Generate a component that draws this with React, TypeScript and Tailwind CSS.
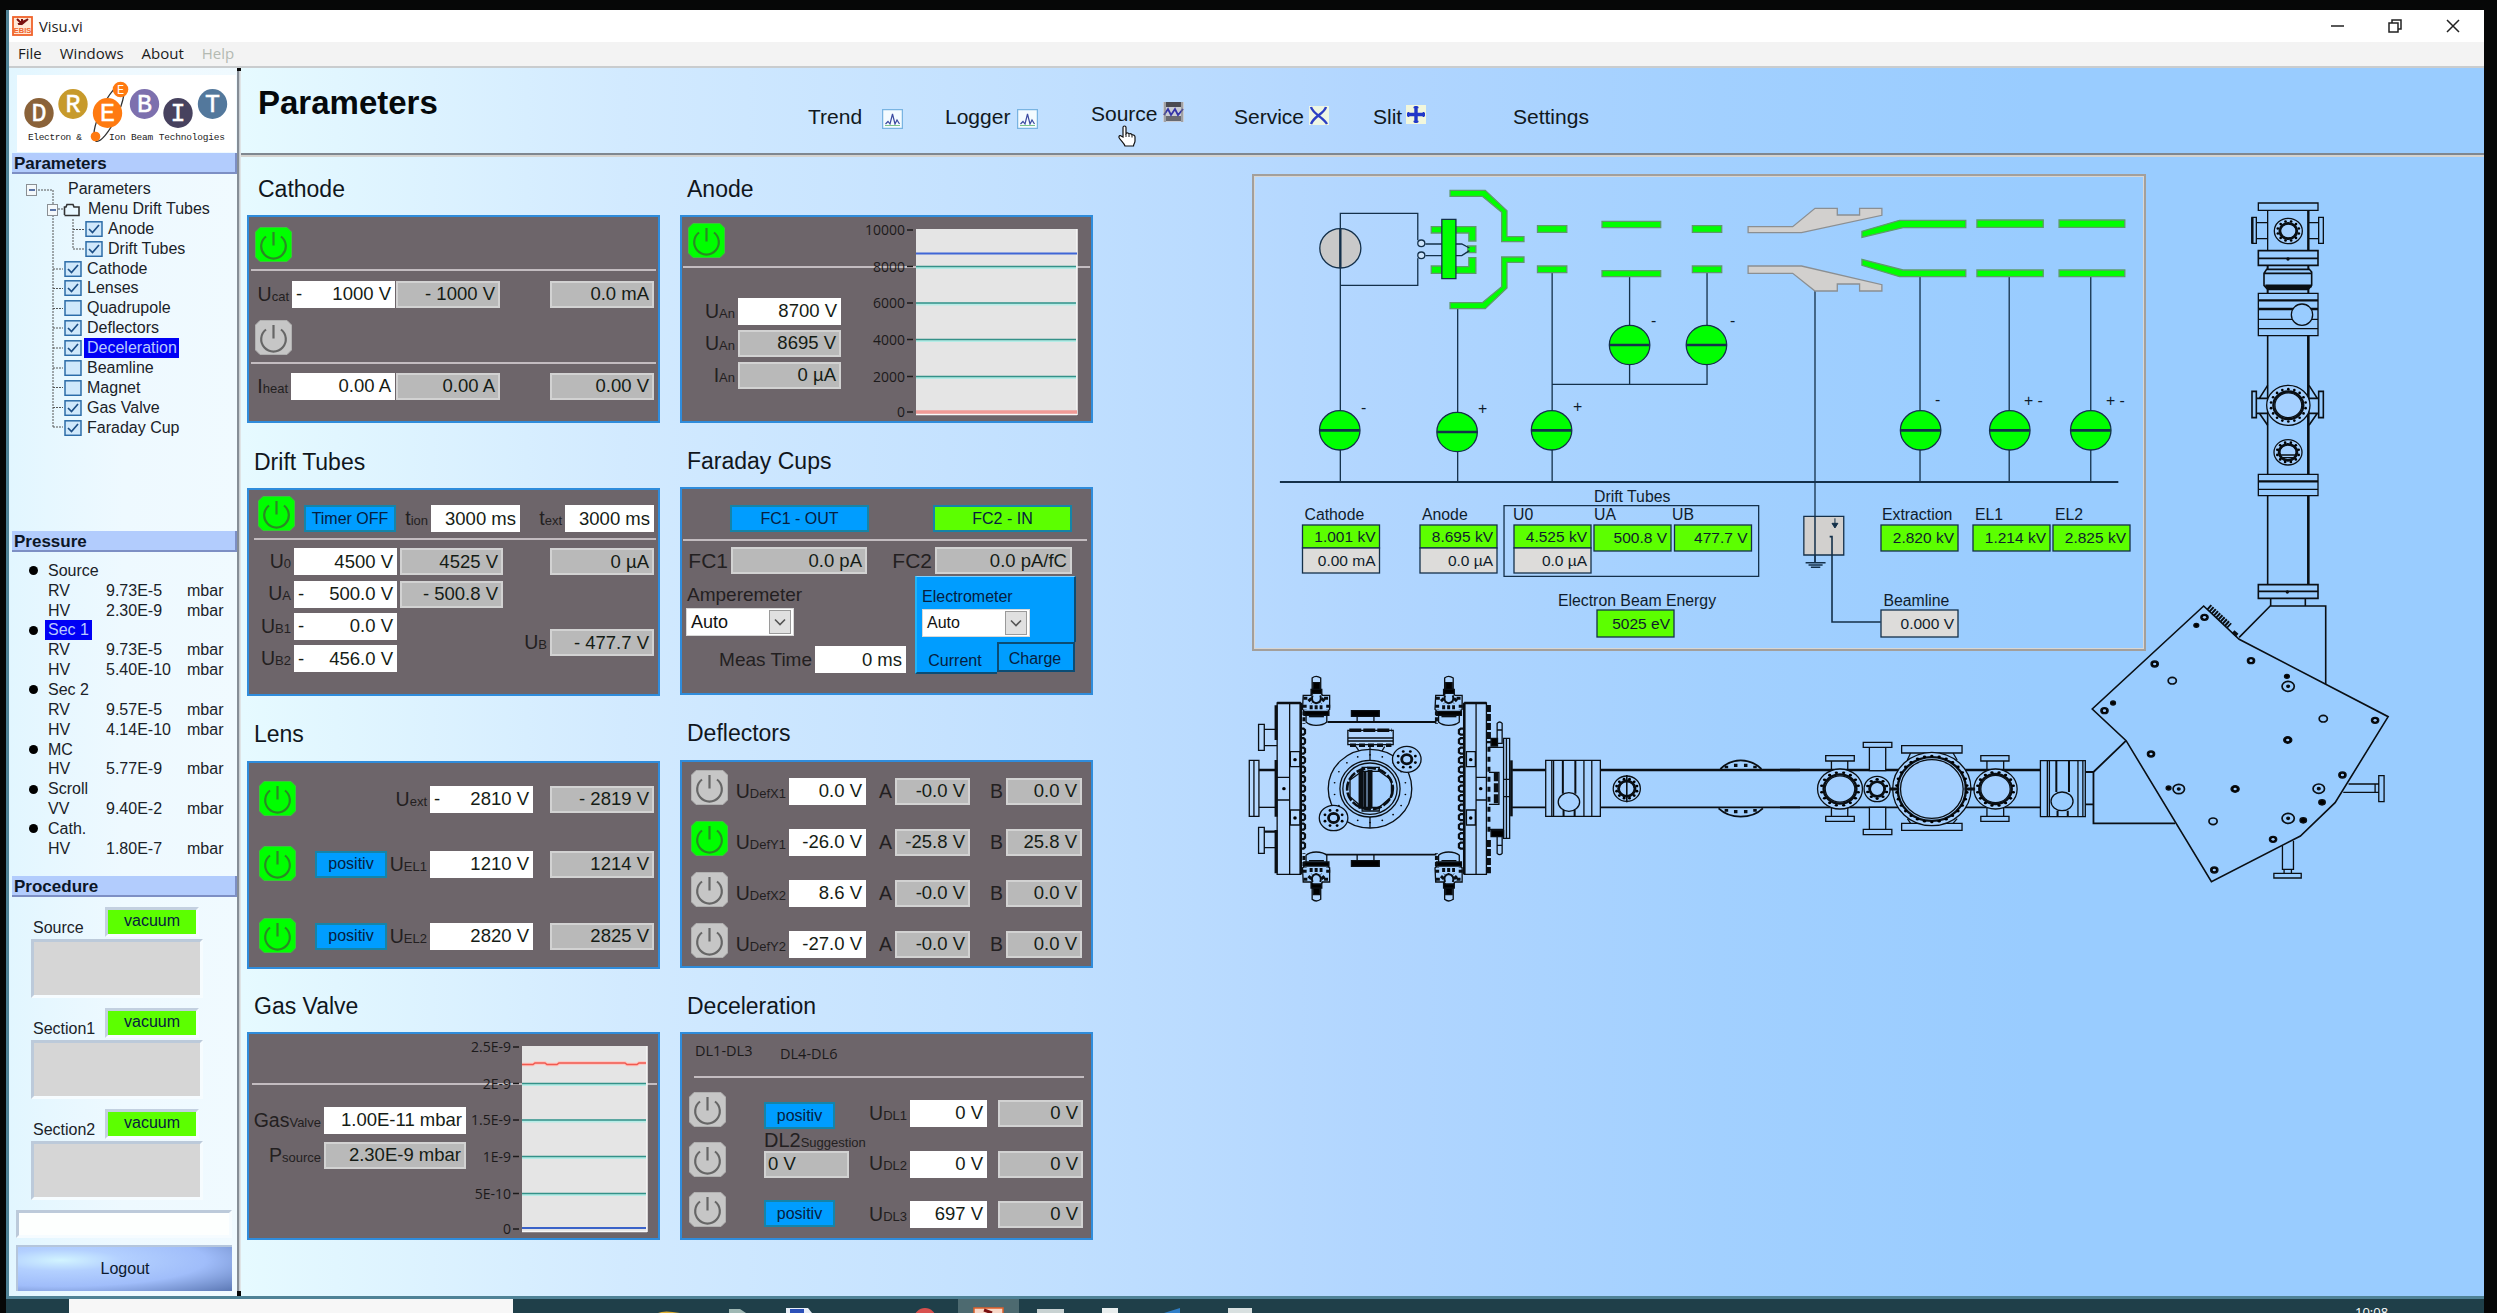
import React from "react";

const cx = (...c: (string | false | undefined)[]) => c.filter(Boolean).join(" ");

/* ---------- small building blocks ---------- */

function Power({ on, className }: { on?: boolean; className?: string }) {
  return (
    <svg viewBox="0 0 37 35" className={cx("h-[35px] w-[37px] shrink-0", className)}>
      <path
        d="M5 0.5H32L36.5 5V30L32 34.5H5L0.5 30V5Z"
        fill={on ? "#00ff00" : "#c6c6c6"}
        stroke={on ? "#38c838" : "#b0b0b0"}
      />
      <path d="M11 9.5A12.3 12.3 0 1 0 26 9.5" fill="none" stroke={on ? "#2a8a24" : "#666"} strokeWidth="2.2" />
      <path d="M18.5 5V18.5" stroke={on ? "#2a8a24" : "#666"} strokeWidth="2.2" />
    </svg>
  );
}

function Field({ v, minus, gray, left, className }: { v: string; minus?: boolean; gray?: boolean; left?: boolean; className?: string }) {
  return (
    <div
      className={cx(
        "flex h-[27px] shrink-0 items-center whitespace-pre px-1 text-[18.5px] leading-none text-[#151c15]",
        gray ? "border-2 border-[#d2d2d2] bg-[#b9b9b9] pr-[3px] pl-0.5" : "bg-white",
        left ? "justify-start" : minus ? "justify-between" : "justify-end",
        className,
      )}
    >
      {minus && <span>-</span>}
      <span>{v}</span>
    </div>
  );
}

function Label({ t, s, className }: { t: string; s?: string; className?: string }) {
  return (
    <div className={cx("flex shrink-0 items-baseline justify-end whitespace-pre pr-[3px] text-[19.5px] leading-none text-[#231f21]", className)}>
      {t}
      {s && <span className="text-[13px]">{s}</span>}
    </div>
  );
}

function Btn({ t, green, className }: { t: string; green?: boolean; className?: string }) {
  return (
    <div
      className={cx(
        "flex h-[27px] shrink-0 items-center justify-center border-2 border-[#1584a8] text-base leading-none text-[#06203f]",
        green ? "bg-[#5cff00]" : "bg-[#009dff]",
        className,
      )}
    >
      {t}
    </div>
  );
}

function Rule({ className }: { className?: string }) {
  return <div className={cx("h-0.5 shrink-0 bg-[#c3bcc0]", className)} />;
}

function Panel({ title, shift, headClass, children }: { title: string; shift?: string; headClass?: string; children: React.ReactNode }) {
  return (
    <section className={cx("flex h-[272.4px] w-[413px] flex-col", shift)}>
      <h2 className={cx("flex h-[63px] items-center pt-[11px] pl-[7px] text-[23px] leading-none text-[#10161c]", headClass)}>{title}</h2>
      <div className="relative flex h-[208px] w-[413px] shrink-0 border-2 border-[#2f8cdb] bg-[#6d656a]">{children}</div>
    </section>
  );
}

function Select({ className, textClass }: { className?: string; textClass?: string }) {
  return (
    <div className={cx("flex h-7 w-[108px] shrink-0 items-center border border-[#d8d8d8] bg-white leading-none text-[#111]", className)}>
      <span className={cx("flex-1 pl-1", textClass)}>Auto</span>
      <span className="mr-0.5 flex h-6 w-[22px] items-center justify-center border border-[#9a9a9a] bg-[#e0e0e0]">
        <svg viewBox="0 0 12 8" className="h-2 w-3">
          <path d="M1 1.5L6 6.5L11 1.5" fill="none" stroke="#555" strokeWidth="1.6" />
        </svg>
      </span>
    </div>
  );
}

/* Strip chart with six labelled ticks; plot height is shared by both charts. */
function Chart({ labels, x0, x1, w, children, className }: { labels: string[]; x0: number; x1: number; w: number; children: React.ReactNode; className?: string }) {
  const ys = [13, 49.5, 86, 122.5, 159.5, 195];
  return (
    <svg width={w} height="204" viewBox={`0 0 ${w} 204`} className={cx("shrink-0", className)}>
      <rect x={x0} y="12" width={x1 - x0} height="186" fill="#e5e5e5" />
      <path d={`M${x1} 12V198M${x0} 197.5H${x1}`} stroke="#f8f8f8" strokeWidth="1.5" />
      {labels.map((l, i) => (
        <g key={l}>
          <text x={x0 - 11} y={ys[i] + 5} textAnchor="end" fontSize="14" fontFamily="'Open Sans', sans-serif" fill="#1c1a1b">
            {l}
          </text>
          <path d={`M${x0 - 9} ${ys[i]}H${x0 - 3}`} stroke="#1c1a1b" strokeWidth="1.5" />
          {i > 0 && i < 5 && (
            <>
              <path d={`M${x0} ${ys[i] + 1}H${x1 - 1}`} stroke="#b5ece6" strokeWidth="3" />
              <path d={`M${x0} ${ys[i]}H${x1 - 1}`} stroke="#359188" strokeWidth="1.6" />
            </>
          )}
        </g>
      ))}
      {children}
    </svg>
  );
}

/* ---------- sidebar ---------- */

function Logo() {
  const balls: [string, number, number, string][] = [
    ["D", 22, 38, "#8a6239"],
    ["R", 56, 29, "#c79a2b"],
    ["E", 90.5, 38, "#ff7a10"],
    ["B", 127.5, 29, "#7d70ae"],
    ["I", 161, 38, "#47425f"],
    ["T", 195.5, 29, "#53789c"],
  ];
  return (
    <svg viewBox="0 0 219 77" className="ml-2 h-[77px] w-[219px] shrink-0 bg-white">
      <ellipse cx="92" cy="38" rx="8.5" ry="31" transform="rotate(25 92 38)" fill="none" stroke="#333" strokeWidth="1.3" />
      {balls.map(([c, x, y, f]) => (
        <g key={c + x}>
          <ellipse cx={x} cy={y} rx="14.7" ry="15" fill={f} />
          <text x={x} y={y + 8} textAnchor="middle" fontFamily="'Liberation Mono', monospace" fontSize="25" fill="#fff" stroke="#fff" strokeWidth="0.5">
            {c}
          </text>
        </g>
      ))}
      <circle cx="103.5" cy="14.5" r="7.8" fill="#ff7a10" />
      <text x="103.5" y="19" textAnchor="middle" fontFamily="'Liberation Mono', monospace" fontSize="12" fill="#fff">
        E
      </text>
      <circle cx="78.5" cy="61.5" r="4.8" fill="#ff7a10" />
      <g fontFamily="'Liberation Mono', monospace" fontSize="9.5" fill="#222">
        <text x="11" y="65" textLength="54">Electron &amp;</text>
        <text x="92" y="65" textLength="116">Ion Beam Technologies</text>
      </g>
    </svg>
  );
}

function SideHeader({ t }: { t: string }) {
  return (
    <div className="ml-[3px] flex h-[21px] shrink-0 items-center border-r-2 border-b-2 border-[#7d8fc4] bg-[#b2ccfd] pt-0.5 pl-0.5 text-[17px] leading-none font-bold text-[#0c1626]">
      {t}
    </div>
  );
}

const tree: { t: string; lvl: number; on?: boolean; sel?: boolean }[] = [
  { t: "Anode", lvl: 2, on: true },
  { t: "Drift Tubes", lvl: 2, on: true },
  { t: "Cathode", lvl: 1, on: true },
  { t: "Lenses", lvl: 1, on: true },
  { t: "Quadrupole", lvl: 1 },
  { t: "Deflectors", lvl: 1, on: true },
  { t: "Deceleration", lvl: 1, on: true, sel: true },
  { t: "Beamline", lvl: 1 },
  { t: "Magnet", lvl: 1 },
  { t: "Gas Valve", lvl: 1, on: true },
  { t: "Faraday Cup", lvl: 1, on: true },
];

function Tree() {
  return (
    <div className="relative mt-[5px] text-base leading-none text-[#1a2228]">
      <svg viewBox="0 0 90 260" className="absolute top-0 left-0 h-[260px] w-[90px]">
        <path
          d="M29 11H44V26M44 36V248M49 30H55M64 40V70M64 50.5H75M64 70H75M44 90H54M44 109.500H54M44 129.500H54M44 149H54M44 169H54M44 189H54M44 208.500H54M44 228.500H54M44 248H54"
          fill="none"
          stroke="#555"
          strokeDasharray="2 1"
        />
        <g fill="#f4f8fa" stroke="#8a8f94">
          <rect x="17.500" y="5.500" width="10" height="11" />
          <rect x="38.500" y="25.500" width="10" height="11" />
        </g>
        <path d="M20 11H26M41 31H47" stroke="#2a4a8a" strokeWidth="1.500" />
        <path d="M55.500 36V28H57L58 25.500H64L65 28H70V36.500H55.500" fill="none" stroke="#333" strokeWidth="1.600" />
      </svg>
      <div className="flex h-[19.9px] items-center pl-[59px]">Parameters</div>
      <div className="flex h-[19.9px] items-center pl-[79px]">Menu Drift Tubes</div>
      {tree.map((r) => (
        <div key={r.t} className={cx("flex h-[19.9px] items-center", r.lvl === 2 ? "pl-[76px]" : "pl-[55px]")}>
          <svg viewBox="0 0 18 16" className="mr-0.5 h-4 w-[18px] shrink-0">
            <rect x="1" y="0.800" width="16" height="14.500" fill="#cfe8fb" stroke="#2c6ca8" strokeWidth="1.500" />
            {r.on && <path d="M4 8L7.500 11.500L14 4" fill="none" stroke="#1d4f86" strokeWidth="1.700" />}
          </svg>
          <span className={cx("flex h-[19.5px] items-center px-[3px]", r.sel && "bg-[#0000f5] pr-0.5 text-[#b9c9ff]")}>{r.t}</span>
        </div>
      ))}
    </div>
  );
}

const pressure: { h?: string; sel?: boolean; k?: string; v?: string }[] = [
  { h: "Source" },
  { k: "RV", v: "9.73E-5" },
  { k: "HV", v: "2.30E-9" },
  { h: "Sec 1", sel: true },
  { k: "RV", v: "9.73E-5" },
  { k: "HV", v: "5.40E-10" },
  { h: "Sec 2" },
  { k: "RV", v: "9.57E-5" },
  { k: "HV", v: "4.14E-10" },
  { h: "MC" },
  { k: "HV", v: "5.77E-9" },
  { h: "Scroll" },
  { k: "VV", v: "9.40E-2" },
  { h: "Cath." },
  { k: "HV", v: "1.80E-7" },
];

function Pressure() {
  return (
    <div className="mt-[9px] text-base leading-none text-[#1a2228]">
      {pressure.map((r, i) => (
        <div key={i} className="flex h-[19.85px] items-center pl-5">
          {r.h ? (
            <>
              <span className="size-[9px] rounded-full bg-black" />
              <span className={cx("ml-[7px] flex h-5 items-center px-[3px]", r.sel && "bg-[#0000f5] text-[#b9c9ff]")}>{r.h}</span>
            </>
          ) : (
            <>
              <span className="ml-[19px] w-[58px]">{r.k}</span>
              <span className="w-[81px]">{r.v}</span>
              <span>mbar</span>
            </>
          )}
        </div>
      ))}
    </div>
  );
}

function Procedure({ t, className }: { t: string; className?: string }) {
  return (
    <div className={cx("flex h-[101px] flex-col pl-[22px]", className)}>
      <div className="flex h-[32px] items-start text-base leading-none text-[#1a2228]">
        <span className="w-[74px] pt-[13px] pl-0.5">{t}</span>
        <span className="flex h-[30px] w-[94px] items-center justify-center border-[3px] border-t-[#c3d0e0] border-r-[#f6fcff] border-b-[#f6fcff] border-l-[#c3d0e0] bg-[#5cff00] pb-0.5 text-[#06203f]">
          vacuum
        </span>
      </div>
      <div className="h-[59px] w-[172px] border-[3px] border-t-[#bccada] border-r-[#f6fcff] border-b-[#f6fcff] border-l-[#bccada] bg-[#d6d6d6]" />
    </div>
  );
}

function Sidebar() {
  return (
    <aside className="flex w-[228px] shrink-0 flex-col bg-linear-to-r from-[#e2f6ff] via-[#eef9ff] to-[#f0faff] pt-[7px]">
      <Logo />
      <div className="mt-px flex h-[378px] shrink-0 flex-col">
        <SideHeader t="Parameters" />
        <Tree />
      </div>
      <div className="flex h-[345px] shrink-0 flex-col">
        <SideHeader t="Pressure" />
        <Pressure />
      </div>
      <SideHeader t="Procedure" />
      <Procedure t="Source" className="mt-2.5" />
      <Procedure t="Section1" />
      <Procedure t="Section2" />
      <div className="mt-0 ml-[7px] h-7 w-[216px] shrink-0 border-[3px] border-t-[#bccada] border-r-[#f6fcff] border-b-[#f6fcff] border-l-[#bccada] bg-[#fdfffe]" />
      <div className="mt-[7px] ml-[7px] flex h-[46px] w-[216px] shrink-0 items-center justify-center border-t-2 border-l-2 border-[#b5c6dc] bg-[radial-gradient(ellipse_at_20%_30%,#d2f4ff_0%,#b3d0ff_25%,#a0bdfa_60%,#5c78b4_100%)] text-base text-[#0c1a30]">
        Logout
      </div>
    </aside>
  );
}

/* ---------- header ---------- */

function TrendIcon() {
  return (
    <svg viewBox="0 0 21 20" className="h-5 w-[21px]">
      <rect x="0.500" y="0.500" width="20" height="19" fill="#f4fbff" stroke="#79b4e2" strokeWidth="1.500" />
      <path d="M3.500 15L6 12.500L8 15L10.500 5L13 15L15 11L17.500 15" fill="none" stroke="#3b4aa0" strokeWidth="1.200" />
      <path d="M3 16.500H18" stroke="#7cc48a" />
    </svg>
  );
}

function TopBar() {
  return (
    <header className="flex h-[87px] shrink-0 border-b-2 border-[#7f8790] text-[21px] leading-none text-[#101820] shadow-[0_2px_0_#d5d3cf]">
      <h1 className="w-[567px] pt-[18px] pl-[17px] text-[33px] leading-none font-bold text-[#05090c]">Parameters</h1>
      <nav className="flex flex-1 items-start pt-[38px]">
        <span className="flex w-[137px] justify-between pr-[42px]">
          Trend <span className="pt-[3px]"><TrendIcon /></span>
        </span>
        <span className="flex w-[146px] justify-between pr-[53px]">
          Logger <span className="pt-[3px]"><TrendIcon /></span>
        </span>
        <span className="relative -mt-[3px] flex w-[143px] gap-[5px]">
          Source
          <svg viewBox="0 0 21 20" className="-mt-px h-5 w-[21px]">
            <rect x="0" y="0" width="21" height="20" fill="#c9ccd4" />
            <rect x="3" y="0" width="15" height="5" fill="#4b4b52" />
            <rect x="3" y="14" width="15" height="5" fill="#6a6a70" />
            <path d="M1 13L5 7L8 13L12 7L15 13L20 7" fill="none" stroke="#3434a8" strokeWidth="1.800" />
            <path d="M2 0V20M19 0V20" stroke="#777" />
          </svg>
          <svg viewBox="0 0 20 22" className="absolute top-[22px] left-[25px] h-[22px] w-5">
            <path
              d="M7 12V2.500C7 0.500 10 0.500 10 2.500V8.500C11 7.500 12.800 8 13 9C14.500 8.300 16 9 16 10C17.500 9.500 19 10.300 19 12V16C19 18 17.500 19 17.500 21H9C8 18 4 15 3 12.500C2.500 10.500 4.500 10 5.500 11.200Z"
              fill="#fff"
              stroke="#111"
              strokeWidth="1.200"
            />
            <path d="M10 9V12M13 9.500V12M16 10.500V12.500" stroke="#111" />
          </svg>
        </span>
        <span className="flex w-[139px] gap-[5px]">
          Service
          <svg viewBox="0 0 20 19" className="h-[19px] w-5">
            <rect width="20" height="19" fill="#eef6e4" />
            <path d="M2 1C4 8 14 11 18 18M17 1C15 8 5 10 2 18" fill="none" stroke="#2c3fc4" strokeWidth="2.400" />
          </svg>
        </span>
        <span className="flex w-[140px] gap-1">
          Slit
          <svg viewBox="0 0 20 19" className="-mt-px h-[19px] w-5">
            <rect width="20" height="19" fill="#f2f7dc" />
            <path d="M10 1V18M1 9.500H19" stroke="#2238c8" strokeWidth="3.400" />
            <path d="M7.500 2.500H12.500M7.500 16.500H12.500M2.500 7V12M17.500 7V12" stroke="#2238c8" strokeWidth="1.600" />
          </svg>
        </span>
        <span>Settings</span>
      </nav>
    </header>
  );
}

/* ---------- parameter panels ---------- */

function DefRow({ s, v, a, b }: { s: string; v: string; a: string; b: string }) {
  return (
    <div className="flex h-[27px] items-center">
      <Label t="U" s={s} className="w-[61px]" />
      <Field v={v} className="w-[77px]" />
      <Label t="A" className="w-[29px]" />
      <Field gray v={a} className="w-[75px]" />
      <Label t="B" className="w-9" />
      <Field gray v={b} className="w-[76px]" />
    </div>
  );
}

function Panels() {
  return (
    <div className="-mt-[3px] grid w-[846px] shrink-0 grid-cols-[413px_413px] content-start gap-x-5 pl-1.5">
      <Panel title="Cathode" headClass="pl-[11px]">
        <div className="flex flex-1 flex-col pl-[2px]">
          <Power on className="mt-2.5 ml-1" />
          <Rule className="mt-[7px] mr-0.5" />
          <div className="mt-2.5 flex items-center">
            <Label t="U" s="cat" className="w-[41px]" />
            <Field minus v="1000 V" className="w-[103px]" />
            <Field gray v="- 1000 V" className="ml-px w-[104px]" />
            <Field gray v="0.0 mA" className="ml-[50px] w-[104px]" />
          </div>
          <Power className="mt-3 ml-1" />
          <Rule className="mt-[7px] mr-0.5" />
          <div className="mt-[9px] flex items-center">
            <Label t="I" s="heat" className="w-10" />
            <Field v="0.00 A" className="w-[104px]" />
            <Field gray v="0.00 A" className="ml-px w-[104px]" />
            <Field gray v="0.00 V" className="ml-[50px] w-[104px]" />
          </div>
        </div>
      </Panel>

      <Panel title="Anode">
        <Rule className="absolute top-[49px] right-px left-px" />
        <div className="relative flex w-[160px] flex-col gap-[5px]">
          <Power on className="mt-1.5 mb-[35px] ml-1.5" />
          <div className="flex items-center">
            <Label t="U" s="An" className="w-14" />
            <Field v="8700 V" className="w-[103px]" />
          </div>
          <div className="flex items-center">
            <Label t="U" s="An" className="w-14" />
            <Field gray v="8695 V" className="w-[103px]" />
          </div>
          <div className="flex items-center">
            <Label t="I" s="An" className="w-14" />
            <Field gray v="0 µA" className="w-[103px]" />
          </div>
        </div>
        <Chart labels={["10000", "8000", "6000", "4000", "2000", "0"]} x0={56} x1={217} w={220} className="relative ml-[18px]">
          <path d="M56 36.500H217" stroke="#3f66d6" strokeWidth="1.800" />
          <path d="M56 195H217" stroke="#f09a96" strokeWidth="3.500" />
        </Chart>
      </Panel>

      <Panel title="Drift Tubes" shift="pt-px">
        <div className="flex flex-1 flex-col">
          <div className="mt-[6px] flex h-9 items-start">
            <Power on className="ml-[9px]" />
            <Btn t="Timer OFF" className="mt-[9px] ml-[9px] w-[92px]" />
            <div className="mt-[9px] flex h-[27px] items-center">
              <Label t="t" s="ion" className="w-[35px] pr-2" />
              <Field v="3000 ms" className="w-[89px]" />
              <Label t="t" s="ext" className="w-[45px]" />
              <Field v="3000 ms" className="w-[89px]" />
            </div>
          </div>
          <Rule className="mt-[6px] mr-0.5 ml-[5px]" />
          <div className="mt-[8px] flex">
            <div className="flex flex-col gap-[5.300px]">
              <div className="flex items-center">
                <Label t="U" s="0" className="w-[45px]" />
                <Field v="4500 V" className="w-[103px]" />
                <Field gray v="4525 V" className="ml-[3px] w-[103px]" />
              </div>
              <div className="flex items-center">
                <Label t="U" s="A" className="w-[45px]" />
                <Field minus v="500.0 V" className="w-[103px]" />
                <Field gray v="- 500.8 V" className="ml-[3px] w-[103px]" />
              </div>
              <div className="flex items-center">
                <Label t="U" s="B1" className="w-[45px]" />
                <Field minus v="0.0 V" className="w-[103px]" />
              </div>
              <div className="flex items-center">
                <Label t="U" s="B2" className="w-[45px]" />
                <Field minus v="456.0 V" className="w-[103px]" />
              </div>
            </div>
            <div className="ml-3 flex flex-col">
              <Field gray v="0 µA" className="ml-[35px] w-[104px]" />
              <div className="mt-[54px] flex items-center">
                <Label t="U" s="B" className="w-[35px]" />
                <Field gray v="- 477.7 V" className="w-[104px]" />
              </div>
            </div>
          </div>
        </div>
      </Panel>

      <Panel title="Faraday Cups">
        <div className="flex flex-1 flex-col">
          <div className="mt-4 flex">
            <Btn t="FC1 - OUT" className="ml-12 h-7 w-[139px]" />
            <Btn t="FC2 - IN" green className="ml-16 h-7 w-[139px]" />
          </div>
          <Rule className="mt-[7px] mr-1 ml-px" />
          <div className="mt-1.5 flex items-center">
            <Label t="FC1" className="w-[49px] text-[21px]" />
            <Field gray v="0.0 pA" className="w-[136px]" />
            <Label t="FC2" className="w-[68px] text-[21px]" />
            <Field gray v="0.0 pA/fC" className="w-[137px]" />
          </div>
          <div className="flex">
            <div className="flex w-[233px] flex-col">
              <span className="mt-[11px] ml-[5px] text-[19px] leading-none text-[#231f21]">Amperemeter</span>
              <Select className="mt-[4px] ml-1" textClass="text-lg leading-none" />
              <div className="mt-[10px] flex items-center">
                <Label t="Meas Time" className="w-[133px] text-[19px]" />
                <Field v="0 ms" className="w-[91px]" />
              </div>
            </div>
            <div className="mt-0.5 flex w-[161px] flex-col text-base leading-none text-[#06203f]">
              <div className="h-[66px] border-t border-r-2 border-l-2 border-t-[#7fd0ff] border-r-[#0b4c74] border-l-[#23b4f5] bg-[#009dff] pl-[5px]">
                <span className="mt-[12px] block">Electrometer</span>
                <Select className="mt-[4px]" textClass="text-base leading-none" />
              </div>
              <div className="flex h-8">
                <span className="flex w-[82px] items-center justify-center border-b-2 border-l-2 border-b-[#0b4c74] border-l-[#23b4f5] bg-[#009dff] pt-2 pr-1">Current</span>
                <span className="flex h-[30px] w-[78px] items-center justify-center border-2 border-[#0b4c74] bg-[#009dff] pt-[3px] pr-0.5">Charge</span>
              </div>
            </div>
          </div>
        </div>
      </Panel>

      <Panel title="Lens" shift="pt-px">
        <div className="flex flex-1 flex-col">
          <div className="mt-[18px] flex h-[35px] items-start">
            <Power on className="ml-2.5" />
            <div className="mt-[5px] flex items-center">
              <Label t="U" s="ext" className="w-[134px]" />
              <Field minus v="2810 V" className="w-[103px]" />
              <Field gray v="- 2819 V" className="ml-[17px] w-[104px]" />
            </div>
          </div>
          {[
            { s: "EL1", v: "1210 V", r: "1214 V", m: "mt-[30px]" },
            { s: "EL2", v: "2820 V", r: "2825 V", m: "mt-[37px]" },
          ].map((e) => (
            <div key={e.s} className={cx("flex h-[35px] items-start", e.m)}>
              <Power on className="ml-2.5" />
              <div className="mt-[5px] flex items-center">
                <Btn t="positiv" className="ml-[19px] w-[72px]" />
                <Label t="U" s={e.s} className="w-[43px]" />
                <Field v={e.v} className="w-[103px]" />
                <Field gray v={e.r} className="ml-[17px] w-[104px]" />
              </div>
            </div>
          ))}
        </div>
      </Panel>

      <Panel title="Deflectors">
        <div className="flex flex-col gap-4 pt-[8px] pl-[9px]">
          <Power />
          <Power on />
          <Power />
          <Power />
        </div>
        <div className="flex flex-col gap-[24px] pt-4">
          <DefRow s="DefX1" v="0.0 V" a="-0.0 V" b="0.0 V" />
          <DefRow s="DefY1" v="-26.0 V" a="-25.8 V" b="25.8 V" />
          <DefRow s="DefX2" v="8.6 V" a="-0.0 V" b="0.0 V" />
          <DefRow s="DefY2" v="-27.0 V" a="-0.0 V" b="0.0 V" />
        </div>
      </Panel>

      <Panel title="Gas Valve">
        <Rule className="absolute top-[49px] right-px left-[3px]" />
        <div className="relative flex w-[218px] flex-col gap-2 pt-[73px]">
          <div className="flex items-center">
            <Label t="Gas" s="Valve" className="w-[75px]" />
            <Field v="1.00E-11 mbar" className="w-[142px] px-0.5" />
          </div>
          <div className="flex items-center">
            <Label t="P" s="source" className="w-[75px]" />
            <Field gray v="2.30E-9 mbar" className="w-[142px]" />
          </div>
        </div>
        <Chart labels={["2.5E-9", "2E-9", "1.5E-9", "1E-9", "5E-10", "0"]} x0={55} x1={180} w={184} className="relative">
          <path d="M55 30.500H66L68 29H78L80 30.500H90L92 29H158L160 30.500H170L172 29H179" fill="none" stroke="#ffc4be" strokeWidth="3.500" />
          <path d="M55 30.500H66L68 29H78L80 30.500H90L92 29H158L160 30.500H170L172 29H179" fill="none" stroke="#f05a50" strokeWidth="1.500" />
          <path d="M55 194H179" stroke="#3a62c8" strokeWidth="2" />
        </Chart>
      </Panel>

      <Panel title="Deceleration">
        <div className="flex flex-1 flex-col">
          <div className="mt-[10px] flex h-7 font-['Open_Sans',sans-serif] text-[14.500px] leading-none text-[#1c1a1b]">
            <span className="ml-[13px] w-[85px]">DL1-DL3</span>
            <span className="mt-[3px]">DL4-DL6</span>
          </div>
          <Rule className="mt-1 mr-[7px] ml-3" />
          <div className="flex">
            <div className="flex flex-col gap-[15px] pt-[14px] pl-[7px]">
              <Power />
              <Power />
              <Power />
            </div>
            <div className="flex w-[104px] flex-col pt-6 pl-[38px]">
              <Btn t="positiv" className="w-[71px]" />
              <div className="mt-px flex h-[21px] items-baseline text-[20px] leading-none whitespace-pre text-[#231f21]">
                DL2<span className="text-[13px]">Suggestion</span>
              </div>
              <Field gray left v="0 V" className="w-[85px]" />
              <Btn t="positiv" className="mt-[22px] w-[71px]" />
            </div>
            <div className="flex flex-col gap-[23.500px] pt-[22px]">
              {[
                { s: "DL1", v: "0 V" },
                { s: "DL2", v: "0 V" },
                { s: "DL3", v: "697 V" },
              ].map((d) => (
                <div key={d.s} className="flex items-center">
                  <Label t="U" s={d.s} className="w-[80px]" />
                  <Field v={d.v} className="w-[77px]" />
                  <Field gray v="0 V" className="ml-[11px] w-[85px]" />
                </div>
              ))}
            </div>
          </div>
        </div>
      </Panel>
    </div>
  );
}

/* ---------- electrode schematic ---------- */

const G = "#00ff00";
const B = "#d2d0ce";

function Supply({ x, y }: { x: number; y: number }) {
  return (
    <>
      <ellipse cx={x} cy={y} rx="34.500" ry="59" fill={G} />
      <path d={`M${x - 34} ${y}H${x + 34}`} strokeWidth="2.600" />
    </>
  );
}

function ValueBox({ x, y, h, v, gray }: { x: number; y: number; h: number; v: string; gray?: boolean }) {
  return (
    <g>
      <rect x={x} y={y} width="77" height={h} fill={gray ? "#dddcda" : "#5cff00"} stroke="#14304a" strokeWidth="1.300" />
      <text x={x + 73} y={y + h / 2 + 5.200} textAnchor="end" fontSize="15.500">
        {v}
      </text>
    </g>
  );
}

function Schematic() {
  const bars = [
    [507, 197, 50, 20], [507, 318, 50, 20], [617, 184, 100, 19], [617, 332, 100, 18], [771, 197, 50, 20], [771, 318, 50, 20],
    [1256, 180, 113, 22], [1256, 330, 113, 20], [1396, 180, 112, 22], [1396, 330, 112, 20],
  ];
  const labels: [string, number, number][] = [
    ["Cathode", 1304.5, 520], ["Anode", 1422, 520], ["U0", 1513, 520], ["UA", 1594, 520], ["UB", 1672, 520], ["Drift Tubes", 1594, 501.500],
    ["Extraction", 1882, 520], ["EL1", 1975, 520], ["EL2", 2055, 520], ["Electron Beam Energy", 1558, 605.500], ["Beamline", 1883.500, 605.500],
    ["-", 1361, 413], ["+", 1478, 414], ["+", 1573, 412], ["-", 1651, 326], ["-", 1730, 326], ["-", 1935, 405], ["+ -", 2024, 406], ["+ -", 2106, 406],
  ];
  return (
    <div className="mt-[19px] h-[477px] w-[894px] border-2 border-[#a39f9b] shadow-[inset_1px_1px_0_#d9d6d2,inset_-1px_-1px_0_#d9d6d2]">
      <svg viewBox="1254 176 890 473" className="h-[473px] w-[890px]" fontFamily="'Liberation Sans', Arial, sans-serif" fill="#0f1c2c">
        <g transform="translate(1240 160) scale(0.58673 0.33333)" className="[&_*]:[vector-effect:non-scaling-stroke]" fill="none" stroke="#14304a" strokeWidth="1.300">
          <path d="M171 208V160H303V241M303 295V376H171M171 324V966M371 446V966M532 338V966M664 350V673M796 338V673H532M980 393V1208M1159 350V966M1311 350V966M1450 350V966" />
          <path d="M68 966H1497" strokeWidth="2" />
          <ellipse cx="171" cy="265" rx="35" ry="59" fill="#c9c9c9" />
          <path d="M171 207V324" strokeWidth="2.400" />
          <g fill={G} stroke="#5f9a6a">
            <path d="M358 91H418L455 152V230H484V245H446V157L413 109H358Z" />
            <path d="M358 446H418L455 384V307H484V291H446V380L413 428H358Z" />
            <path d="M326 200H344V219H326ZM326 318H344V340H326Z" />
            <path d="M368 200H402V243H390V219H368Z" />
            <path d="M368 340H402V293H390V320H368Z" />
            <path d="M388 258H402V278H388Z" />
            <path d="M1060 214L1124 181H1237V203H1130L1060 232Z" />
            <path d="M1060 298L1130 330H1237V350H1124L1060 316Z" />
            {bars.map(([x, y, w, h]) => (
              <rect key={`${x}-${y}`} x={x} y={y} width={w} height={h} />
            ))}
          </g>
          <path d="M316 252H378L391 264M316 287H378L391 272" />
          <rect x="344" y="178" width="24" height="178" fill={G} />
          <ellipse cx="309" cy="250" rx="6" ry="10" fill="#cde4fb" />
          <ellipse cx="309" cy="286" rx="6" ry="10" fill="#cde4fb" />
          <g fill={B} stroke="#8b8f92">
            <path d="M866 200H942L980 145H1018V165H1056V145H1094V166L957 218H866Z" />
            <path d="M866 318H957L1094 374V393H1056V372H1018V393H980L942 340H866Z" />
          </g>
          <Supply x={170} y={811} />
          <Supply x={370} y={816} />
          <Supply x={531} y={811} />
          <Supply x={664} y={555} />
          <Supply x={795} y={555} />
          <Supply x={1160} y={811} />
          <Supply x={1312} y={811} />
          <Supply x={1450} y={811} />
          <rect x="961" y="1069" width="68" height="116" fill={B} />
          <path d="M980 1069V1208M964 1208H998M969 1215H993M973 1222H989" strokeWidth="1.500" />
          <path d="M1014 1075V1100M1009 1090H1019L1014 1104Z" strokeWidth="1" fill="#14304a" />
          <path d="M1005 1130H1009V1386H1092" strokeWidth="1.600" />
          <rect x="450" y="1037" width="434" height="212" />
        </g>
        {labels.map(([t, x, y]) => (
          <text key={t + x} x={x} y={y} fontSize="15.800">
            {t}
          </text>
        ))}
        <ValueBox x={1302.500} y={525} h={23} v="1.001 kV" />
        <ValueBox x={1302.500} y={548} h={25} v="0.00 mA" gray />
        <ValueBox x={1420} y={525} h={23} v="8.695 kV" />
        <ValueBox x={1420} y={548} h={25} v="0.0 µA" gray />
        <ValueBox x={1514} y={525} h={23} v="4.525 kV" />
        <ValueBox x={1514} y={548} h={25} v="0.0 µA" gray />
        <ValueBox x={1594} y={525} h={26} v="500.8 V" />
        <ValueBox x={1674.500} y={525} h={26} v="477.7 V" />
        <ValueBox x={1881} y={525} h={26} v="2.820 kV" />
        <ValueBox x={1973} y={525} h={26} v="1.214 kV" />
        <ValueBox x={2053} y={525} h={26} v="2.825 kV" />
        <ValueBox x={1597} y={610} h={27} v="5025 eV" />
        <ValueBox x={1881} y={610} h={27} v="0.000 V" gray />
      </svg>
    </div>
  );
}

/* ---------- beamline drawing ---------- */

/* Bolted round flange: outer edge, bolt circle and inner bore. */
function Ring({ x, y, rx, ry, k = 0.7, n = 16, heavy }: { x: number; y: number; rx: number; ry: number; k?: number; n?: number; heavy?: boolean }) {
  const m = (1 + k) / 2;
  return (
    <g>
      <ellipse cx={x} cy={y} rx={rx} ry={ry} fill="#a5d0ff" />
      {heavy && <ellipse cx={x} cy={y} rx={rx * (k + 0.07)} ry={ry * (k + 0.07)} strokeWidth="2.400" />}
      <ellipse cx={x} cy={y} rx={rx * k} ry={ry * k} />
      {Array.from({ length: n }, (_, i) => {
        const a = ((i + 0.5) / n) * Math.PI * 2;
        return <circle key={i} cx={x + Math.cos(a) * rx * m} cy={y + Math.sin(a) * ry * m} r={heavy ? 4 : 2.500} fill="#000" stroke="none" />;
      })}
    </g>
  );
}

/* Corner valve of the source chamber, drawn pointing up around its own centre line. */
function CornerValve({ x, y, flip }: { x: number; y: number; flip?: boolean }) {
  return (
    <g transform={`translate(${x} ${y}) scale(1 ${flip ? -1 : 1})`}>
      <path d="M-11 4Q0 -6 13 4V38H-11Z" />
      <path d="M-8 18H10V38H-8Z" fill="#000" />
      <path d="M-14 38H16V56H-14Z" fill="#000" />
      <path d="M-36 56H-14L-8 50H14L18 56H38V98L30 108H-30L-38 98Z" fill="#a5d0ff" />
      <path d="M-30 60V72M28 60V72M-32 84V100M34 84V100M-20 66L-10 78M22 66L12 78M-18 92H18" strokeWidth="4" strokeDasharray="3 2" />
      <path d="M-10 56Q-16 76 0 80Q18 76 12 56" strokeWidth="2" />
      <path d="M-34 104H36V116H-34Z" fill="#000" />
      <path d="M-28 116H30V136Q20 146 0 146Q-18 146 -28 136Z" fill="#a5d0ff" />
      <path d="M-20 120H22" />
      <path d="M-34 104V142" strokeWidth="3" strokeDasharray="4 2" />
    </g>
  );
}

function Machine() {
  const bolts = Array.from({ length: 13 }, (_, i) => 215 + i * 28.500);
  const holes: [number, number, number][] = [
    [1040, 112, 9], [1020, 136, 6], [918, 252, 9], [795, 392, 9], [816, 369, 6], [909, 522, 9], [952, 624, 6], [1154, 242, 9], [1242, 289, 6],
    [1244, 480, 10], [1458, 421, 9], [1378, 585, 9], [1115, 627, 10], [1328, 667, 8], [1282, 721, 8], [1208, 778, 9], [1064, 870, 9],
  ];
  const rings: [number, number, number][] = [[961, 302, 10], [1331, 416, 10], [1061, 724, 10], [1245, 319, 15], [977, 627, 14], [1320, 626, 14], [1245, 715, 15]];
  return (
    <svg viewBox="1240 160 1200 760" className="pointer-events-none absolute top-[5px] left-[153px] h-[760px] w-[1200px]">
      {/* ion source chamber and first tube section */}
      <g transform="translate(1240 660) scale(0.35714 0.33333)" className="[&_*]:[vector-effect:non-scaling-stroke]" fill="none" stroke="#0a0f14" strokeWidth="1.300">
        <path d="M52 193H68V271H52ZM68 208H104M68 257H104M52 502H68V580H52ZM26 301H53V469H26ZM39 301V469M68 563H104" />
        <path d="M53 330H104M68 515H104" strokeWidth="2.400" />
        <path d="M53 442H104" />
        <path d="M104 129H170V643H104ZM139 129V643M104 352H139V420H104ZM141 275H168V320H141ZM141 450H168V495H141Z" />
        <path d="M101 136V240M101 300V470M101 510V640" strokeWidth="3" />
        <path d="M170 129V643M628 129V643" strokeWidth="2.600" />
        <path d="M628 129H690V643H628ZM661 129V643M661 352H690V420H661ZM634 275H659V320H634ZM634 450H659V495H634Z" />
        <path d="M104 129H170M628 129H690" strokeWidth="2.400" />
        <path d="M697 135V250M697 540V640" strokeWidth="4" strokeDasharray="7 2" />
        <path d="M697 260V530" strokeWidth="3" strokeDasharray="5 5" />
        {bolts.map((y) => (
          <path key={y} d={`M170 ${y - 9}H178L182 ${y - 5}V${y + 5}L178 ${y + 9}H170M628 ${y - 9}H618L613 ${y - 5}V${y + 5}L618 ${y + 9}H628`} strokeWidth="2.200" />
        ))}
        {[[123, 386], [154, 299], [154, 474], [674, 386], [646, 299], [646, 474]].map(([x, y]) => (
          <circle key={`${x}-${y}`} cx={x} cy={y} r="5" fill="#000" stroke="none" />
        ))}
        <path d="M245 186H550M238 584H550" strokeWidth="1.800" />
        <path d="M312 152H390V169H312ZM312 602H390V619H312Z" fill="#000" />
        <path d="M328 169V185M375 169V185M328 585V602M375 585V602" />
        <CornerValve x={213} y={50} />
        <CornerValve x={584} y={50} />
        <CornerValve x={213} y={722} flip />
        <CornerValve x={584} y={722} flip />

        <path d="M302 211H429V254H302ZM302 234H429M302 243H429" />
        <path d="M306 211H425" strokeWidth="3.500" strokeDasharray="12 2" />
        <path d="M308 256H424" strokeWidth="3.500" strokeDasharray="6 3" />
        <path d="M325 260L335 276M405 260L396 276" />
        <Ring x={364} y={386} rx={117} ry={118} k={0.72} n={18} />
        <ellipse cx="364" cy="386" rx="76" ry="77" />
        <ellipse cx="364" cy="386" rx="64" ry="62" strokeWidth="2.600" strokeDasharray="9 2" />
        <path d="M342 322H390V334H342ZM342 442H390V453H342Z" />
        <path d="M342 334L308 360V410L342 442M390 334L424 360V410L390 442" />
        <path d="M339 330V446M364 330V446" strokeWidth="5" />
        <path d="M350 334V442" strokeWidth="3" />
        <path d="M364 258V300M364 471V503" />
        <Ring x={467} y={298} rx={40} ry={39} k={0.3} n={8} heavy />
        <Ring x={262} y={474} rx={40} ry={38} k={0.3} n={8} heavy />

        <path d="M697 262H738M697 508H738M697 337H725V433H697M738 235H755V535H738ZM746 235V535M738 358H755V410H738Z" />
        <path d="M720 190Q727 182 734 190V250H720ZM720 525V580Q727 588 734 580V525ZM720 210H734M720 556H734" />
        <path d="M703 235H721V258H703ZM703 512H738V530H703Z" fill="#000" />
        <path d="M717 337V433" strokeWidth="4.500" strokeDasharray="9 2" />
        <path d="M760 301V469" strokeWidth="2.600" />
        <path d="M762 330H856M1009 330H1568" strokeWidth="2.600" />
        <path d="M762 442H856M1009 442H1568" strokeWidth="1.600" />
        <path d="M856 301H1009V469H856ZM873 301V469M878 301V469M963 301V469M985 301V469" />
        <path d="M904 301V401M939 301V401M906 450V469M937 450V469" strokeWidth="2" />
        <ellipse cx="921" cy="426" rx="30" ry="28" />
        <Ring x={1083} y={386} rx={38} ry={38} k={0.55} n={12} heavy />
        <path d="M1083 345V427" strokeWidth="1.600" />
        <path d="M1345 327Q1370 301 1402 301Q1435 301 1460 327M1340 445Q1365 470 1402 470Q1440 470 1464 445" strokeWidth="1.800" />
        <path d="M1388 311V321M1416 311V321M1388 450V460M1416 450V460M1362 317V325M1442 317V325M1362 447V455M1442 447V455" strokeWidth="3.500" />
      </g>

      {/* diagnostics crosses, gate valve and bending magnet */}
      <g transform="translate(1780 580) scale(0.40816 0.33333)" className="[&_*]:[vector-effect:non-scaling-stroke]" fill="none" stroke="#0a0f14" strokeWidth="1.300">
        <path d="M0 570H638" strokeWidth="2.400" />
        <path d="M0 682H638" strokeWidth="1.600" />
        <path d="M112 527H182V543H112ZM126 543V570M166 543V570M112 709H182V724H112ZM126 682V709M166 682V709" />
        <path d="M492 527H561V543H492ZM507 543V570M548 543V570M492 709H561V724H492ZM507 682V709M548 682V709" />
        <path d="M204 487H274V502H204ZM219 502H259V572H219ZM204 748H274V764H204ZM219 682H259V748H219ZM298 497H446V519H298ZM298 730H446V751H298Z" fill="#9fceff" />
        <path d="M320 519L312 540M424 519L434 540M320 730L312 716M424 730L434 716" />
        <Ring x={147} y={627} rx={55} ry={60} k={0.66} n={16} heavy />
        <Ring x={238} y={627} rx={32} ry={38} k={0.52} n={10} heavy />
        <Ring x={372} y={627} rx={96} ry={110} k={0.8} n={30} heavy />
        <Ring x={528} y={627} rx={53} ry={60} k={0.68} n={16} heavy />
        <path d="M268 627H292M452 627H478" strokeWidth="3" />
        <path d="M638 542H748V710H638ZM655 542V710M660 542V710M730 542V710M742 542V710" />
        <path d="M677 542V636M708 542V636M680 692V710M705 692V710" strokeWidth="2" />
        <ellipse cx="691" cy="664" rx="27" ry="28" />
        <path d="M749 576H768V673H749M768 576L848 482M768 673V730H968" strokeWidth="1.800" />

        <path d="M1038 78L765 387L848 482L1057 905L1275 768L1360 668L1490 410L1125 178Z" strokeWidth="1.600" />
        <path d="M1050 80L1102 138" strokeWidth="6" strokeDasharray="2 1" />
        <path d="M1110 155L1120 166" strokeWidth="4" />
        <path d="M1125 172L1201 78H1337V312" strokeWidth="1.600" />
        <path d="M1393 612H1460M1380 637H1460M1458 612H1467V637H1458ZM1467 587H1480V665H1467Z" />
        <path d="M1231 797V868H1258V782M1235 868H1253V880H1235ZM1210 880H1277V894H1210Z" />
        {holes.map(([x, y, r]) => (
          <g key={`${x}-${y}`}>
            <circle cx={x} cy={y} r={r} fill="#000" />
            {r > 8 && <circle cx={x} cy={y} r="4" fill="#9bcaff" stroke="none" />}
          </g>
        ))}
        {rings.map(([x, y, r]) => (
          <g key={`${x}-${y}`}>
            <circle cx={x} cy={y} r={r} strokeWidth="1.700" />
            {r > 12 && <circle cx={x} cy={y} r="3.500" fill="#000" />}
          </g>
        ))}
      </g>

      {/* vertical branch */}
      <g transform="translate(2200 190) scale(0.33333 0.33333)" className="[&_*]:[vector-effect:non-scaling-stroke]" fill="none" stroke="#0a0f14" strokeWidth="1.300">
        <path d="M175 39H354V61H175ZM203 61V181M156 82H169V160H156ZM356 82H370V160H356ZM169 98H203M169 146H203M327 98H356M327 146H356" />
        <path d="M325 61V181M157 82V160" strokeWidth="2.400" />
        <path d="M175 182H354V226H175ZM175 205H354M175 182H354" strokeWidth="1.600" />
        <path d="M203 226V238M325 226V238M203 300V310M325 300V310" strokeWidth="2" />
        <path d="M200 238H328L335 246V286L325 298H203L192 286V250ZM192 250H335" strokeWidth="1.600" />
        <path d="M196 288H335M200 295H328" strokeWidth="2.800" />
        <path d="M175 310H354V437H175ZM175 388H354M175 416H354" />
        <path d="M175 331H354M175 357H354" strokeWidth="2.400" />
        <circle cx="306" cy="374" r="32" fill="#99ccff" />
        <path d="M203 437V853M203 918V1184" strokeWidth="1.600" />
        <path d="M325 437V853M325 918V1184" strokeWidth="2.600" />
        <path d="M156 604H169V683H156ZM356 604H370V683H356ZM169 625H203M169 670H203M327 625H356M327 670H356M203 586L178 625M203 706L178 670M327 586L352 625M327 706L352 670" strokeWidth="1.600" />
        <Ring x={265} y={123} rx={42} ry={38} k={0.55} n={12} heavy />
        <Ring x={265} y={646} rx={65} ry={60} k={0.62} n={18} heavy />
        <Ring x={264} y={787} rx={42} ry={38} k={0.58} n={12} heavy />
        <path d="M241 795H288M246 803H282" />
        <path d="M175 853H354V917H175ZM175 898H354" />
        <path d="M175 874H354" strokeWidth="2.400" />
        <path d="M175 1184H354V1225H175ZM175 1204H354M212 1225V1248M316 1225V1248" strokeWidth="1.600" />
        <circle cx="264" cy="207" r="3" fill="#000" />
        <circle cx="262" cy="1206" r="3" fill="#000" />
      </g>
    </svg>
  );
}

/* ---------- window ---------- */

function TitleBar() {
  return (
    <>
      <div className="flex h-8 shrink-0 items-center bg-white pl-[3px] font-['Open_Sans',sans-serif] text-[14.800px] text-[#222]">
        <svg viewBox="0 0 21 20" className="h-5 w-[21px]">
          <rect x="1" y="1" width="19" height="18" fill="#ffe9d8" stroke="#f0622a" strokeWidth="1.800" />
          <path d="M5 3L10 8L16 3M6 8L15 4M10 3V9" stroke="#7a1010" strokeWidth="2" fill="none" />
          <text x="10.500" y="17" textAnchor="middle" fontSize="7.500" fontWeight="bold" fontFamily="'Liberation Sans', sans-serif" fill="#f0622a">
            EBIS
          </text>
        </svg>
        <span className="ml-1.5 flex-1">Visu.vi</span>
        <svg viewBox="0 0 130 16" className="mr-[23px] h-4 w-[130px]" fill="none" stroke="#222" strokeWidth="1.500">
          <path d="M0 8H13M116 2L128 14M128 2L116 14" />
          <path d="M58 5H67V14H58ZM61 5V2H70V11H67" />
        </svg>
      </div>
      <div className="flex h-[26px] shrink-0 items-center gap-[18px] border-b-2 border-[#c9ccce] bg-[#f3f3f3] pb-0.5 pl-[9px] font-['Open_Sans',sans-serif] text-[15px] text-[#1b1b1b]">
        <span>File</span>
        <span>Windows</span>
        <span>About</span>
        <span className="text-[#b4bab2]">Help</span>
      </div>
    </>
  );
}

function Taskbar() {
  return (
    <div className="flex h-[14px] items-start overflow-hidden bg-[#1f3f49]">
      <div className="ml-[63px] h-full w-[444px] shrink-0 bg-[#f7f7f7]" />
      <svg viewBox="513 0 1000 14" className="h-[14px] w-[1000px] shrink-0">
        <rect x="958" y="0" width="61" height="14" fill="#4d6a70" />
        <path d="M658 14Q664 11 680 14Z" fill="#e0b030" />
        <path d="M729 10H740L746 14H729Z" fill="#9fb8b4" />
        <path d="M786 9H808L812 14H786Z" fill="#e8eef8" />
        <path d="M790 10H804V14H790Z" fill="#2b50b8" />
        <circle cx="925" cy="20" r="11" fill="#d8504e" />
        <rect x="974" y="9" width="29" height="8" fill="#f8d8c8" stroke="#e0602a" strokeWidth="1.500" />
        <path d="M984 11L992 14" stroke="#7a1010" strokeWidth="3" />
        <rect x="1037" y="10" width="27" height="6" fill="#c8d2d2" />
        <rect x="1102" y="9" width="16" height="8" fill="#e8eeee" />
        <path d="M1164 14L1180 9V14Z" fill="#2f7fc8" />
        <rect x="1228" y="9" width="24" height="6" fill="#d8e0e0" />
      </svg>
      <span className="ml-[842px] pt-[5px] font-['Open_Sans',sans-serif] text-[13px] leading-[16px] text-white">10:08</span>
    </div>
  );
}

export default function App() {
  return (
    <div className="flex h-[1313px] w-[2497px] flex-col overflow-hidden bg-[#060707] pt-2.5 pr-[13px] pl-1.5 font-['Liberation_Sans',Arial,sans-serif]">
      <div className="flex h-[1289px] shrink-0 flex-col border-b-[3px] border-l-[3px] border-[#4f8296]">
        <TitleBar />
        <div className="flex min-h-0 flex-1">
          <Sidebar />
          <div className="mt-[3px] mb-[5px] w-1 shrink-0 border-r border-l-2 border-r-[#dfe4e6] border-l-[#858d96] bg-[#c9ced2]" />
          <main className="flex min-w-0 flex-1 flex-col bg-[linear-gradient(to_right,#e6faff_0%,#d2eaff_17%,#c0dfff_37%,#b2d6ff_50%,#a2d0ff_66%,#99ccff_80%,#99ccff_100%)]">
            <TopBar />
            <div className="flex min-h-0 flex-1">
              <Panels />
              <div className="relative flex-1 pl-[165px]">
                <Schematic />
                <Machine />
              </div>
            </div>
          </main>
        </div>
      </div>
      <Taskbar />
    </div>
  );
}
